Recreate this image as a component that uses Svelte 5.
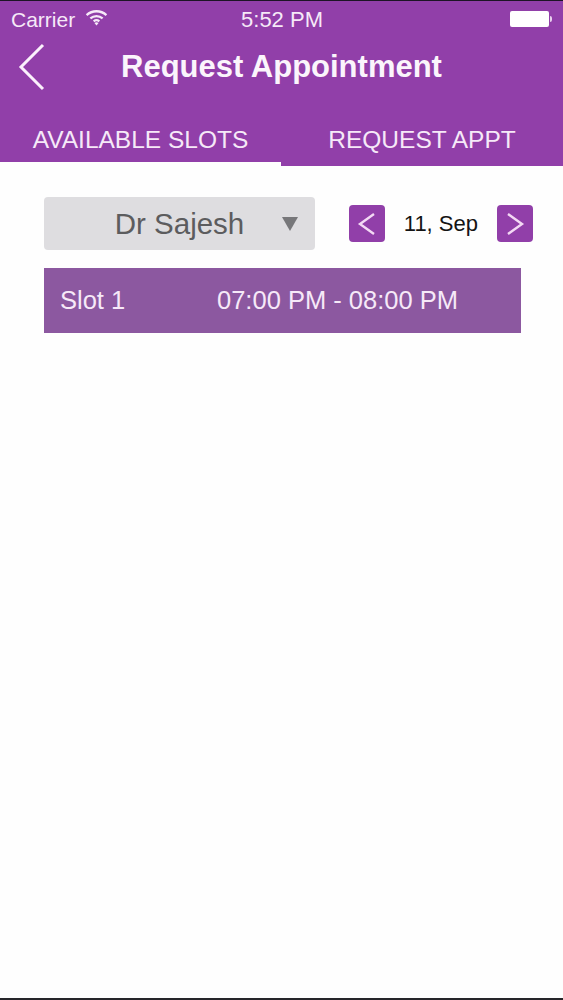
<script>
  const slots = [{ name: 'Slot 1', time: '07:00 PM - 08:00 PM' }];
</script>

<div class="page">
  <header class="header">
    <div class="status">
      <div class="status-left">
        <span>Carrier</span>
        <svg class="wifi" viewBox="0 0 24 18" aria-hidden="true">
          <path d="M1.5 6.5C7.5 1 16.5 1 22.5 6.5" />
          <path d="M5.5 10C9.3 6.6 14.7 6.6 18.5 10" />
          <path d="M9 13C10.8 11.6 13.2 11.6 15 13" />
          <path class="dot" d="M12 17.5L9.8 14.8C11 13.9 13 13.9 14.2 14.8Z" />
        </svg>
      </div>
      <span class="clock">5:52 PM</span>
      <div class="battery"><i></i></div>
    </div>
    <div class="nav">
      <svg class="back" viewBox="0 0 28 48" aria-hidden="true">
        <path d="M25 2L3 24L25 46" />
      </svg>
      <h1>Request Appointment</h1>
    </div>
    <div class="tabs">
      <div class="tab active">AVAILABLE SLOTS</div>
      <div class="tab">REQUEST APPT</div>
    </div>
  </header>

  <main class="content">
    <div class="controls">
      <div class="select">
        <span>Dr Sajesh</span>
        <svg class="caret" viewBox="0 0 16 14" aria-hidden="true"><path d="M0 0H16L8 14Z" /></svg>
      </div>
      <div class="date">
        <button class="step" aria-label="Previous day">
          <svg viewBox="0 0 20 24"><path d="M17 2L3 12L17 22" /></svg>
        </button>
        <span class="date-label">11, Sep</span>
        <button class="step" aria-label="Next day">
          <svg viewBox="0 0 20 24"><path d="M3 2L17 12L3 22" /></svg>
        </button>
      </div>
    </div>
    {#each slots as slot}
      <div class="slot">
        <span class="slot-name">{slot.name}</span>
        <span>{slot.time}</span>
      </div>
    {/each}
  </main>
</div>

<style>
  :global(body) {
    margin: 0;
    background: #fff;
  }
  .page {
    height: 1000px;
    box-sizing: border-box;
    border-top: 1px solid #1d1426;
    border-bottom: 2px solid #26262a;
    background: #fefefe;
    font-family: "Liberation Sans", Arial, sans-serif;
    overflow: hidden;
  }
  .header {
    background: #913fa9;
    color: #fff;
  }
  .status {
    display: grid;
    grid-template-columns: 1fr auto 1fr;
    align-items: center;
    height: 37px;
    padding: 0 10px 0 11px;
    font-size: 21px;
    color: #f6e9f8;
  }
  .clock {
    font-size: 22px;
  }
  .status-left {
    display: flex;
    align-items: center;
    gap: 10px;
  }
  .wifi {
    width: 23px;
    height: 17px;
    margin-top: -4px;
  }
  .wifi path {
    fill: none;
    stroke: #f6e9f8;
    stroke-width: 2.4;
  }
  .wifi path.dot {
    fill: #f6e9f8;
    stroke: none;
  }
  .battery {
    justify-self: end;
    position: relative;
    width: 39px;
    height: 16px;
    margin-right: 4px;
    margin-top: -2px;
    background: #fff;
    border-radius: 2px;
  }
  .battery i {
    position: absolute;
    right: -3px;
    top: 5px;
    width: 2px;
    height: 6px;
    background: #e8cfee;
    border-radius: 0 2px 2px 0;
  }
  .nav {
    position: relative;
    display: flex;
    justify-content: center;
    align-items: center;
    height: 58px;
  }
  .nav h1 {
    margin: 0;
    font-size: 31px;
    font-weight: 700;
    color: #fbf5fc;
  }
  .back {
    position: absolute;
    left: 18px;
    top: 5px;
    width: 28px;
    height: 48px;
  }
  .back path {
    fill: none;
    stroke: #fbf1fc;
    stroke-width: 3;
  }
  .tabs {
    display: grid;
    grid-template-columns: 281px 1fr;
    height: 70px;
  }
  .tab {
    display: flex;
    justify-content: center;
    align-items: center;
    padding-top: 22px;
    border-bottom: 4px solid transparent;
    font-size: 24.5px;
    color: #f6e9f8;
  }
  .tab.active {
    border-bottom-color: #fefefe;
  }
  .content {
    padding: 31px 30px 0 44px;
  }
  .controls {
    display: flex;
    align-items: center;
    justify-content: space-between;
    margin-bottom: 18px;
  }
  .select {
    position: relative;
    display: flex;
    justify-content: center;
    align-items: center;
    box-sizing: border-box;
    width: 271px;
    height: 53px;
    background: #dedde0;
    border-radius: 4px;
    font-size: 29.5px;
    color: #5c5c5e;
  }
  .caret {
    position: absolute;
    right: 17px;
    top: 20px;
    width: 16px;
    height: 14px;
    fill: #77777a;
  }
  .date {
    display: flex;
    align-items: center;
    gap: 19px;
  }
  .date-label {
    font-size: 22px;
    color: #141414;
  }
  .step {
    display: flex;
    align-items: center;
    justify-content: center;
    width: 36px;
    height: 37px;
    padding: 0;
    border: none;
    border-radius: 4px;
    background: #913fa9;
  }
  .step svg {
    width: 20px;
    height: 24px;
    fill: none;
    stroke: #f3d9f4;
    stroke-width: 2.4;
  }
  .slot {
    display: flex;
    align-items: center;
    box-sizing: border-box;
    width: 477px;
    height: 65px;
    padding-left: 16px;
    background: #8c58a0;
    color: #f6e9f8;
    font-size: 25.5px;
  }
  .slot-name {
    width: 157px;
  }
</style>
